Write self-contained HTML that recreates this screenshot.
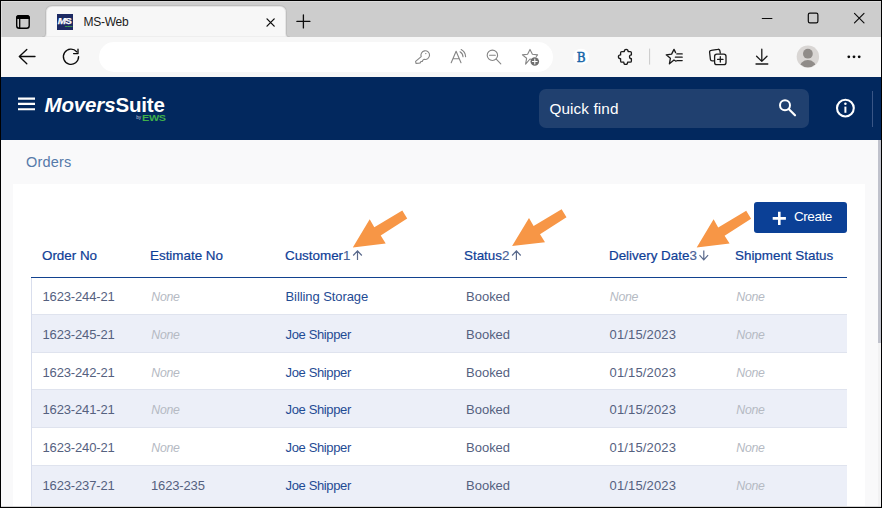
<!DOCTYPE html>
<html lang="en">
<head>
<meta charset="utf-8">
<title>MS-Web</title>
<style>
*{box-sizing:border-box;margin:0;padding:0}
html,body{width:882px;height:508px;overflow:hidden;background:#fff}
body{font-family:"Liberation Sans","DejaVu Sans",sans-serif;position:relative}
.abs{position:absolute}
#frame{position:absolute;left:0;top:0;width:882px;height:508px;border:1px solid #000;pointer-events:none;z-index:50}
#frame:before{content:"";position:absolute;left:0;top:0;width:880px;height:1px;background:#dcdcdc}
#frame:after{content:"";position:absolute;left:0;bottom:0;width:880px;height:1px;background:#d4d4d4}
#hl{left:1px;top:1px;width:1px;height:36px;background:#dcdcdc;z-index:51}
#tabbar{left:1px;top:1px;width:880px;height:36px;background:#cdcdcd}
#tab{left:46px;top:6px;width:240px;height:32px;background:#f7f7f7;border-radius:7px 7px 0 0}
#tabtitle{left:83.5px;top:14px;font-size:12px;color:#1b1b1b;line-height:16px;letter-spacing:-0.25px}
#favicon{left:57px;top:14px;width:16px;height:16px;background:#1c2a63;overflow:hidden}
#favicon .fm{-webkit-text-stroke:0.25px #fff;position:absolute;left:0.8px;top:1.1px;font-size:9.8px;line-height:12px;font-weight:700;color:#fff;letter-spacing:-0.75px;white-space:nowrap}
#favicon .fe{position:absolute;left:7.9px;top:10.9px;font-size:2.4px;line-height:3px;font-weight:700;color:#43b048;-webkit-text-stroke:0.15px #43b048;transform:scaleX(1.35);transform-origin:0 0}
#toolbar{left:1px;top:37px;width:880px;height:40px;background:#f7f7f7}
#addr{left:99px;top:42px;width:454px;height:30px;border-radius:15px;background:#fff}
#apphead{left:1px;top:77px;width:880px;height:63px;background:#02285e}
#content{left:1px;top:140px;width:880px;height:368px;background:#f9f9fa}
#card{left:13px;top:184px;width:852px;height:324px;background:#fff}
#tleft{z-index:5;left:31px;top:278px;width:1px;height:230px;background:#d9deed}
#scroll{left:878px;top:140px;width:3px;height:368px;background:#f2f2f3}
#thumb{left:878px;top:140px;width:3px;height:203px;background:#c0c2cc}
#orders{left:26px;top:153px;font-size:14.5px;color:#567aa9;line-height:18px;letter-spacing:0.2px}
#search{left:539px;top:89px;width:270px;height:39px;border-radius:7px;background:#20406f}
#qf{left:549.5px;top:99px;font-size:15.3px;color:#fff;line-height:20px;letter-spacing:0.1px}
#logo{left:44.5px;top:92.6px;font-size:20.5px;font-weight:700;color:#fff;line-height:24px;letter-spacing:-0.15px;white-space:nowrap}
#by{left:136.3px;top:113.8px;font-size:4.6px;color:#c3cbdb;line-height:8px}
#ews{left:141.8px;top:113.8px;font-size:8.2px;font-weight:700;color:#3fb04a;line-height:10px;transform:scaleX(1.32);transform-origin:0 0;letter-spacing:-0.25px}
#vsep{left:872px;top:91px;width:1px;height:36px;background:#3a5686}
.th{position:absolute;top:246.8px;font-size:13.4px;color:#0f4097;line-height:18px;white-space:nowrap;font-weight:400;-webkit-text-stroke:0.22px #0f4097}
.th b{font-weight:400;color:#4a6297;-webkit-text-stroke:0.15px #4a6297}
.td{position:absolute;top:10px;font-size:13px;color:#55617f;line-height:18px;white-space:nowrap;letter-spacing:-0.15px}
.st{letter-spacing:-0.03px}
.lnk{color:#1f4b94;letter-spacing:-0.36px}
.bs{letter-spacing:-0.08px}
.dt{letter-spacing:0.15px}
.none{color:#b5bac3;font-style:italic;font-size:12.3px;letter-spacing:-0.3px}
.row{position:absolute;left:31px;width:816px;height:38px}
.row.alt{background:#eceff8}
.row.bt{border-top:1px solid #dfe3ee}
.row.bt .td{top:11px}
#hline{left:31px;top:277px;width:816px;height:1px;background:#12428f}
#create{left:754px;top:202px;width:93px;height:31px;border-radius:3px;background:#0b4096;color:#fff;font-size:13.5px}
#create span{position:absolute;left:40px;top:6px;line-height:18px;letter-spacing:-0.45px}
</style>
</head>
<body>
<div id="tabbar" class="abs"></div>
<svg class="abs" style="left:36px;top:2px" width="262" height="36" viewBox="36 2 262 36"><path d="M42 37.5 Q46 37.5 46 33.5 V12.5 Q46 6 52.5 6 H279.5 Q286 6 286 12.5 V33.5 Q286 37.5 290 37.5 Z" fill="#f7f7f7" stroke="rgba(0,0,0,0.07)" stroke-width="2"/><rect x="36" y="37" width="262" height="1" fill="#f7f7f7"/></svg>
<div id="favicon" class="abs"><span class="fm"><i>M</i>S</span><span class="fe">EWS</span></div>
<div id="tabtitle" class="abs">MS-Web</div>
<div id="toolbar" class="abs"></div>
<div id="addr" class="abs"></div>

<svg class="abs" style="left:0;top:0" width="882" height="78" viewBox="0 0 882 78" fill="none" stroke="#0c0c0c" stroke-width="1.3" stroke-linecap="round" stroke-linejoin="round">
  <!-- tab actions -->
  <rect x="16.7" y="15.7" width="12.5" height="12.5" rx="2.5" stroke="#000" stroke-width="1.35"/>
  <path d="M16.7 18.2 a2.5 2.5 0 0 1 2.5 -2.5 h7.5 a2.5 2.5 0 0 1 2.5 2.5 z" fill="#000" stroke="#000" stroke-width="1.35"/>
  <path d="M19.7 19 V28" stroke="#000" stroke-width="1.3"/>
  <!-- tab close -->
  <path d="M267 18.9 l7.2 7.2 M274.2 18.9 l-7.2 7.2" stroke-width="1.3"/>
  <!-- new tab -->
  <path d="M296.9 21.4 h13 M303.4 14.9 v13" stroke-width="1.3"/>
  <!-- window controls -->
  <path d="M762.3 18.5 h9.6" stroke-width="1.15"/>
  <rect x="808.3" y="13.2" width="9.6" height="9.6" rx="1.6" stroke-width="1.2"/>
  <path d="M854.5 13.4 l9.5 9.5 M864 13.4 l-9.5 9.5" stroke-width="1.15"/>
  <!-- back -->
  <path d="M19.3 56.5 H35 M26.8 49.4 L19.3 56.5 L26.8 63.7" stroke-width="1.35"/>
  <!-- refresh -->
  <path d="M78.6 56.6 A7.6 7.6 0 1 1 76.7 51.7" stroke-width="1.35"/>
  <path d="M78 49.2 V53.6 H73.6" stroke-width="1.35"/>
</svg>

<svg class="abs" style="left:0;top:38px" width="882" height="39" viewBox="0 38 882 39" fill="none" stroke-linecap="round" stroke-linejoin="round">
  <g stroke="#858585" stroke-width="1.1">
    <!-- key -->
    <path d="M421.2 56.6 A4.3 4.3 0 1 1 424.2 59.3 L422.9 60.1 L422.3 61.4 L420.9 61.5 L420.3 62.9 L418.6 63.3 L416 63.4 L415.6 61.4 Z"/>
    <circle cx="425.8" cy="53.6" r="0.7" fill="#858585" stroke="none"/>
    <!-- read aloud -->
    <path d="M451.2 62.8 L456.1 51.2 L461 62.8 M453 58.8 H459.3"/>
    <path d="M460 51.8 A6 6 0 0 1 463 56.8 M461.2 49.6 A8.6 8.6 0 0 1 465.6 56.6"/>
    <!-- zoom out -->
    <circle cx="492.4" cy="55.3" r="5.2"/>
    <path d="M489.6 55.3 H495.3 M496.2 59.2 L500.8 63.8"/>
    <!-- star add -->
    <path d="M531.5 59.5 L530 59 L525.6 64.2 L526.6 58.3 L522.4 54.9 L527.6 54.2 L530 49.4 L532.4 54.2 L537.6 54.9 L536.3 56.3"/>
  </g>
  <circle cx="534.8" cy="61.5" r="4.3" fill="#6e6e6e"/>
  <path d="M532.4 61.5 H537.2 M534.8 59.1 V63.9" stroke="#fff" stroke-width="1.1"/>
  <!-- B extension -->
  <circle cx="581.1" cy="56.8" r="8" fill="#fff"/>
  <!-- puzzle -->
  <path stroke="#1a1a1a" stroke-width="1.3" d="M621.8 51.6 H624.3 A1.9 2.2 0 0 1 628.1 51.6 H630.2 A1.2 1.2 0 0 1 631.4 52.8 V54.9 A1.9 1.9 0 0 0 631.4 58.7 V61 A1.2 1.2 0 0 1 630.2 62.2 H627.6 A1.9 2.2 0 0 1 623.8 62.2 H621.8 A1.2 1.2 0 0 1 620.6 61 V58.7 A2.2 1.9 0 0 1 620.6 54.9 V52.8 A1.2 1.2 0 0 1 621.8 51.6 Z"/>
  <path d="M649.6 49 V64.2" stroke="#c9c9c9" stroke-width="1"/>
  <!-- favorites -->
  <g stroke="#1a1a1a" stroke-width="1.3">
    <path d="M676 61.2 L674 60 L669.4 63.8 L670.4 58.2 L666.2 54.8 L671.6 54.1 L674 49.4 L675.6 52.6"/>
    <path d="M676.8 53.9 H682.2 M675.4 57.2 H682.2 M676.8 60.6 H682.2"/>
    <!-- collections -->
    <path d="M713.6 60.8 L712.2 60.8 A1.8 1.8 0 0 1 710.4 59.3 L709.6 52.3 A1.8 1.8 0 0 1 711.2 50.3 L717.8 49.3 A1.8 1.8 0 0 1 719.9 50.8 L720.3 53.2"/>
    <rect x="714.6" y="54.2" width="11.4" height="10.4" rx="2.2"/>
    <path d="M717.6 59.4 H723 M720.3 56.7 V62.1"/>
    <!-- download -->
    <path d="M761.8 49.2 V61.2 M756.6 56.2 L761.8 61.4 L767 56.2 M756 64 H767.8"/>
  </g>
  <!-- avatar -->
  <clipPath id="avc"><circle cx="807.9" cy="56.7" r="10.6"/></clipPath>
  <circle cx="807.9" cy="56.7" r="11.2" fill="#d9d6d4"/>
  <circle cx="807.9" cy="53.7" r="4.9" fill="#908c89"/>
  <ellipse cx="807.9" cy="68.2" rx="8.6" ry="8.1" fill="#908c89" clip-path="url(#avc)"/>
  <!-- dots -->
  <g fill="#0c0c0c"><circle cx="848.8" cy="56.8" r="1.4"/><circle cx="854" cy="56.8" r="1.4"/><circle cx="859.2" cy="56.8" r="1.4"/></g>
</svg>
<div class="abs" style="left:576.2px;top:51px;width:10px;font:400 12px/14px 'DejaVu Serif','Liberation Serif',serif;color:#1565a8;-webkit-text-stroke:0.45px #1565a8;text-align:center">B</div>
<div id="apphead" class="abs"></div>

<div id="search" class="abs"></div>
<svg class="abs" style="left:0;top:77px" width="882" height="63" viewBox="0 77 882 63" fill="none">
  <path d="M18 98.6 H35 M18 103.9 H35 M18 109.2 H35" stroke="#fff" stroke-width="2.1"/>
  <circle cx="785" cy="105.3" r="5" stroke="#fff" stroke-width="2"/>
  <path d="M788.7 109 L795 115.3" stroke="#fff" stroke-width="2.2" stroke-linecap="round"/>
  <circle cx="845.4" cy="108.1" r="8.4" stroke="#fff" stroke-width="2.1"/>
  <path d="M845.4 106.6 V112.8" stroke="#fff" stroke-width="2"/>
  <circle cx="845.4" cy="103.8" r="1.25" fill="#fff"/>
</svg>
<div id="logo" class="abs"><i>Movers</i>Suite</div>
<div id="by" class="abs">by</div>
<div id="ews" class="abs">EWS</div>
<div id="qf" class="abs">Quick find</div>
<div id="vsep" class="abs"></div>
<div id="content" class="abs"></div>
<div id="orders" class="abs">Orders</div>
<div id="card" class="abs"></div>
<div id="scroll" class="abs"></div>
<div id="thumb" class="abs"></div>


<svg class="abs" style="left:0;top:195px" width="882" height="75" viewBox="0 195 882 75" fill="none">
  <polygon points="352.8,247.4 369.7,219.2 374.3,227.3 402.3,210.6 407.2,218.6 380.7,235.6 385.7,243.5" fill="#f79646"/>
  <polygon points="512.1,246.1 529.0,217.9 533.6,226.0 561.6,209.3 566.5,217.3 540.0,234.3 545.0,242.2" fill="#f79646"/>
  <polygon points="696.7,247.5 713.6,219.3 718.2,227.4 746.2,210.7 751.1,218.7 724.6,235.7 729.6,243.6" fill="#f79646"/>
  <g stroke="#5a6a8c" stroke-width="1.2" fill="none">
    <path d="M357.5 250.9 V260 M353.2 255.5 L357.5 250.9 L361.8 255.5"/>
    <path d="M516.4 250.9 V260 M512.1 255.5 L516.4 250.9 L520.7 255.5"/>
    <path d="M703.8 250.6 V259.7 M699.5 255.2 L703.8 259.8 L708.1 255.2"/>
  </g>
</svg>
<div id="create" class="abs"><svg style="position:absolute;left:18px;top:9px" width="15" height="15" viewBox="0 0 15 15"><path d="M7.3 0.8 V14 M0.7 7.4 H13.9" stroke="#fff" stroke-width="2.6"/></svg><span>Create</span></div>

<div class="th" style="left:42px">Order No</div>
<div class="th" style="left:150px">Estimate No</div>
<div class="th" style="left:285px">Customer<b>1</b></div>
<div class="th" style="left:464px">Status<b>2</b></div>
<div class="th" style="left:609px">Delivery Date<b>3</b></div>
<div class="th" style="left:735px">Shipment Status</div>
<div id="hline" class="abs"></div>
<div id="tleft" class="abs"></div>


<div class="row" style="top:278px;height:36px">
  <span class="td" style="left:11.5px">1623-244-21</span>
  <span class="td none" style="left:120.3px">None</span>
  <span class="td lnk bs" style="left:254.5px">Billing Storage</span>
  <span class="td st" style="left:435.1px">Booked</span>
  <span class="td none" style="left:578.8px">None</span>
  <span class="td none" style="left:705.3px">None</span>
</div>
<div class="row alt bt" style="top:314px;height:38px">
  <span class="td" style="left:11.5px">1623-245-21</span>
  <span class="td none" style="left:120.3px">None</span>
  <span class="td lnk" style="left:254.5px">Joe Shipper</span>
  <span class="td st" style="left:435.1px">Booked</span>
  <span class="td dt" style="left:578.5px">01/15/2023</span>
  <span class="td none" style="left:705.3px">None</span>
</div>
<div class="row bt" style="top:352px;height:37px">
  <span class="td" style="left:11.5px">1623-242-21</span>
  <span class="td none" style="left:120.3px">None</span>
  <span class="td lnk" style="left:254.5px">Joe Shipper</span>
  <span class="td st" style="left:435.1px">Booked</span>
  <span class="td dt" style="left:578.5px">01/15/2023</span>
  <span class="td none" style="left:705.3px">None</span>
</div>
<div class="row alt bt" style="top:389px;height:38px">
  <span class="td" style="left:11.5px">1623-241-21</span>
  <span class="td none" style="left:120.3px">None</span>
  <span class="td lnk" style="left:254.5px">Joe Shipper</span>
  <span class="td st" style="left:435.1px">Booked</span>
  <span class="td dt" style="left:578.5px">01/15/2023</span>
  <span class="td none" style="left:705.3px">None</span>
</div>
<div class="row bt" style="top:427px;height:38px">
  <span class="td" style="left:11.5px">1623-240-21</span>
  <span class="td none" style="left:120.3px">None</span>
  <span class="td lnk" style="left:254.5px">Joe Shipper</span>
  <span class="td st" style="left:435.1px">Booked</span>
  <span class="td dt" style="left:578.5px">01/15/2023</span>
  <span class="td none" style="left:705.3px">None</span>
</div>
<div class="row alt bt" style="top:465px;height:43px">
  <span class="td" style="left:11.5px">1623-237-21</span>
  <span class="td" style="left:120.0px">1623-235</span>
  <span class="td lnk" style="left:254.5px">Joe Shipper</span>
  <span class="td st" style="left:435.1px">Booked</span>
  <span class="td dt" style="left:578.5px">01/15/2023</span>
  <span class="td none" style="left:705.3px">None</span>
</div>

<div id="frame"></div>
<div id="hl" class="abs"></div>
</body>
</html>
